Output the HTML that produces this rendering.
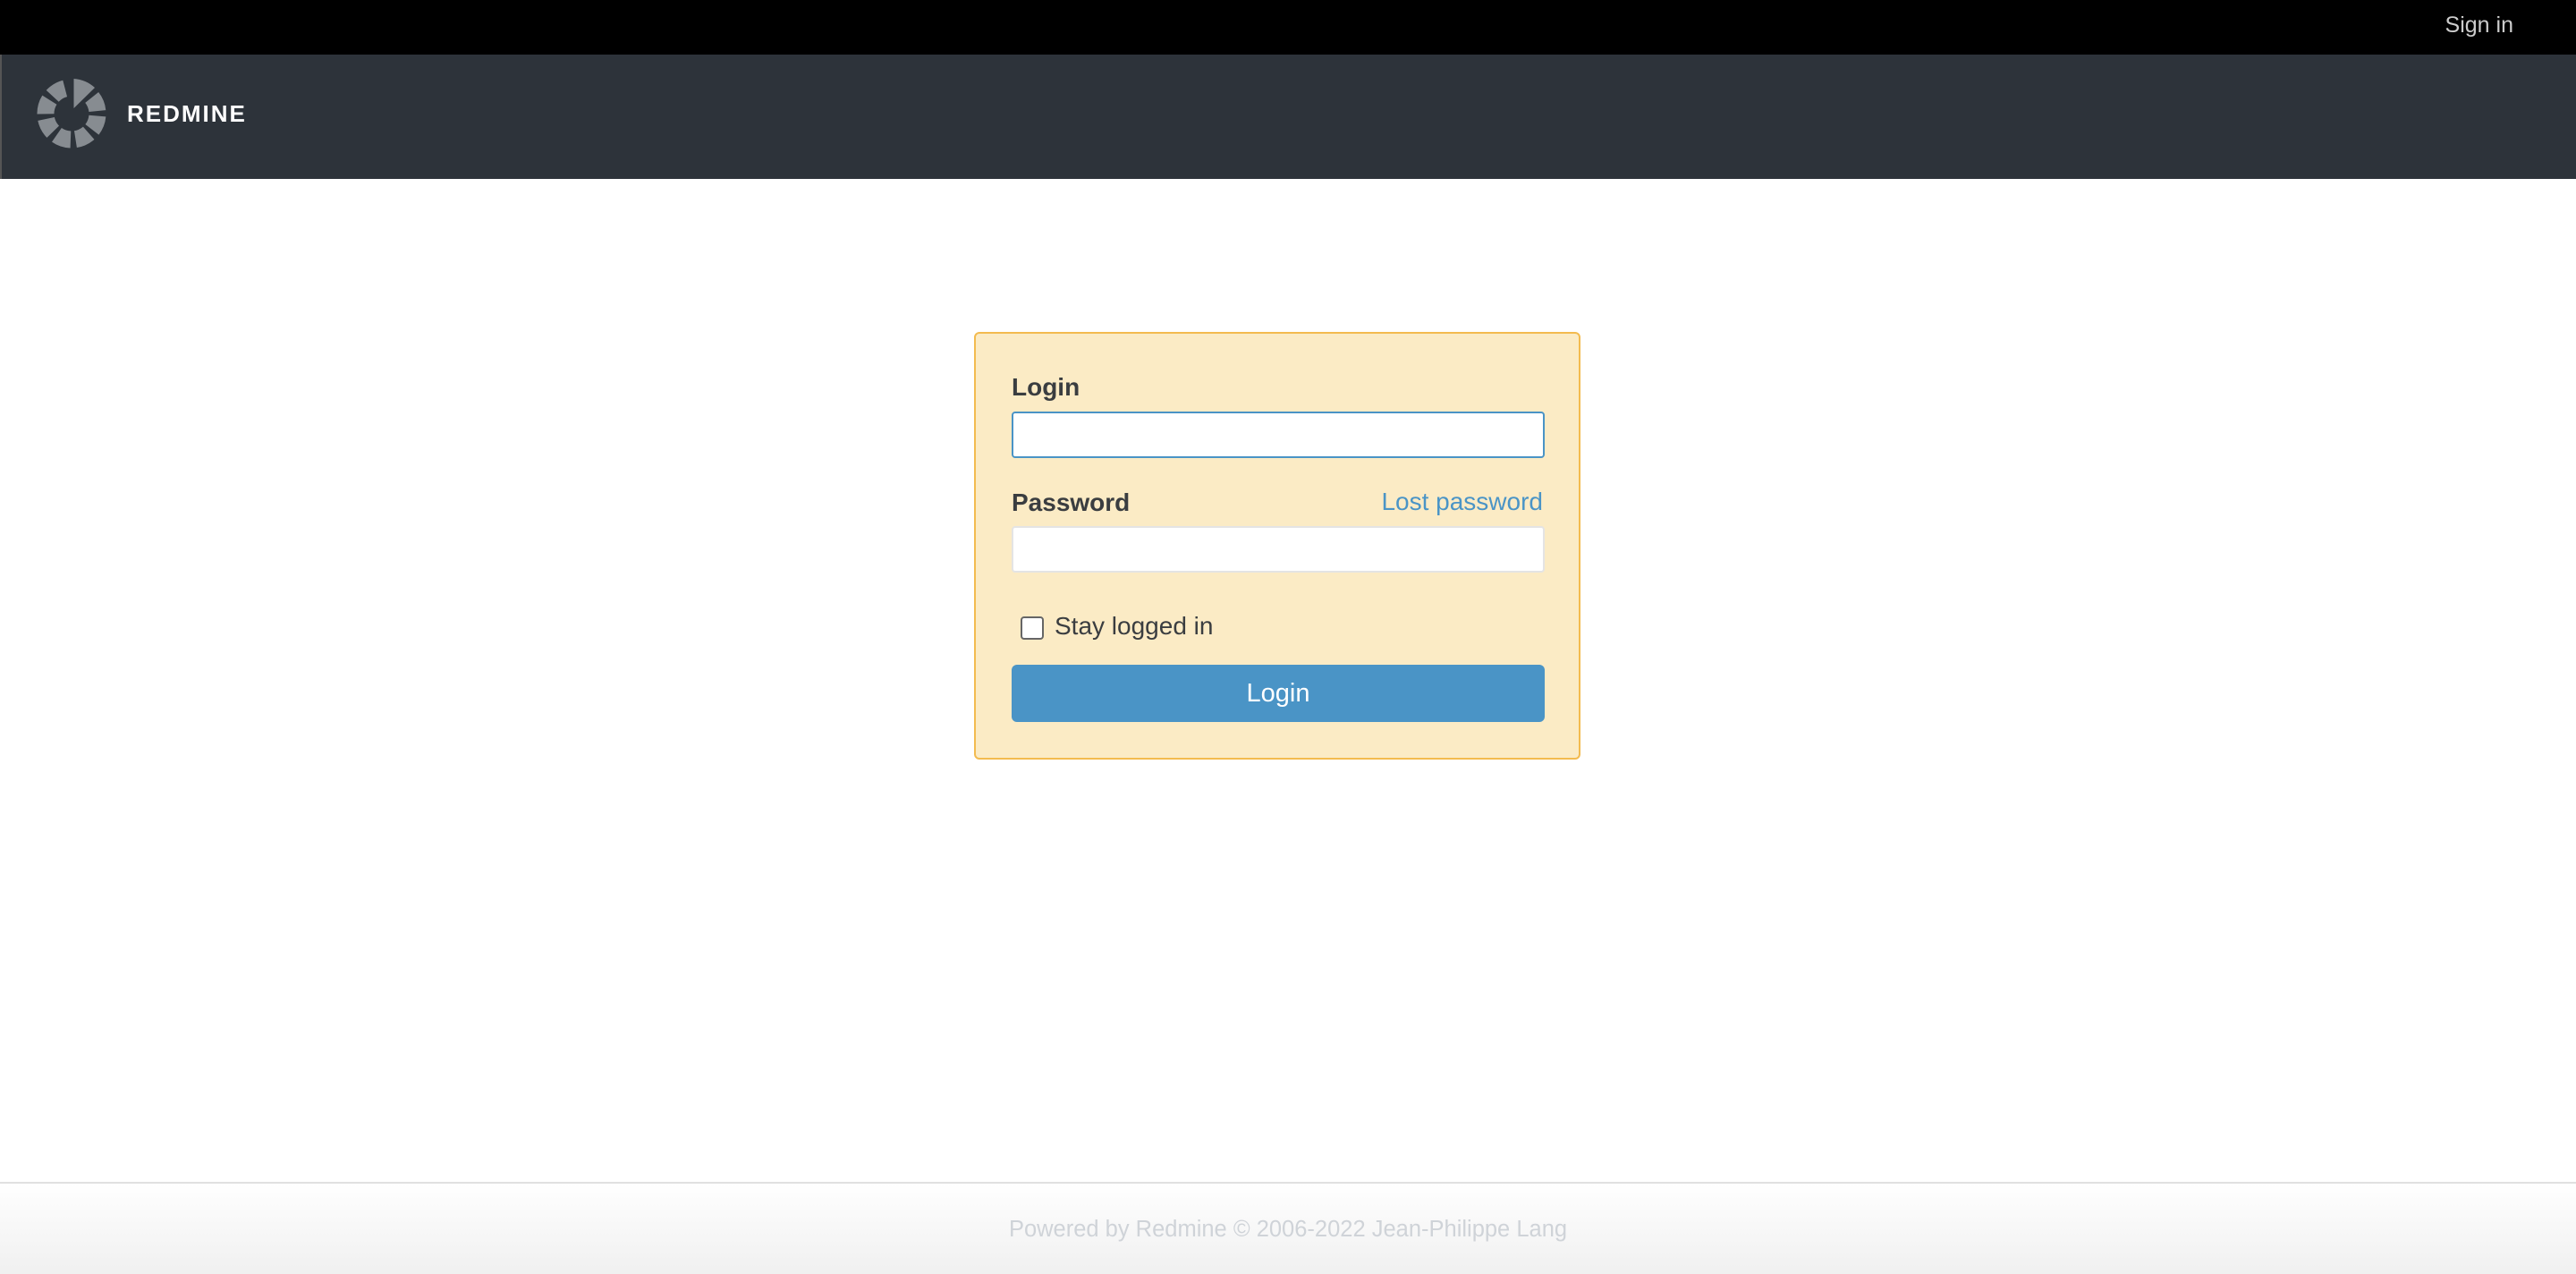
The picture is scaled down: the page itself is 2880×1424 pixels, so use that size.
<!DOCTYPE html>
<html><head><meta charset="utf-8"><style>
html,body{margin:0;padding:0;width:2880px;height:1422px;overflow:hidden;background:#fff;font-family:"Liberation Sans",Arial,sans-serif;}
#top{position:absolute;left:0;top:0;width:2880px;height:61px;background:#000;}
#top span{position:absolute;right:70px;top:14px;color:#ccc;font-size:25px;}
#hdr{position:absolute;left:0;top:61px;width:2880px;height:139px;background:#2d333a;border-left:2px solid #555;box-sizing:border-box;}
#logo{position:absolute;left:38px;top:26px;}
#title{position:absolute;left:140px;top:51px;color:#fff;font-weight:bold;font-size:26px;letter-spacing:2px;}
#box{position:absolute;left:1089px;top:371px;width:678px;height:478px;box-sizing:border-box;background:#fbebc5;border:2px solid #f3bb4f;border-radius:6px;}
.lbl{position:absolute;left:40px;font-size:28px;font-weight:bold;color:#3a3d40;}
.inp{position:absolute;left:40px;width:596px;height:52px;box-sizing:border-box;background:#fff;border:2px solid #e4e4e4;border-radius:4px;}
#lost{position:absolute;right:40px;top:172px;font-size:28px;color:#4a94c6;}
#cb{position:absolute;left:50px;top:316px;width:22px;height:22px;border:2px solid #666;border-radius:4px;background:#fff;}
#stay{position:absolute;left:88px;top:311px;font-size:28px;color:#3a3d40;}
#btn{position:absolute;left:40px;top:370px;width:596px;height:64px;background:#4a94c6;border-radius:6px;color:#fff;font-size:29px;text-align:center;line-height:64px;}
#foot{position:absolute;left:0;top:1321px;width:2880px;height:101px;border-top:2px solid #e0e0e0;background:linear-gradient(#fff,#f0f0f0);text-align:center;}
#foot span{position:absolute;left:0;right:0;top:37px;font-size:25.5px;color:#cfd3d8;}
</style></head><body>
<div id="top"><span>Sign in</span></div>
<div id="hdr">
<svg id="logo" width="80" height="80" viewBox="0 0 80 80">
<circle cx="40" cy="40" r="29" fill="none" stroke="#878c91" stroke-width="19" stroke-dasharray="16.5 5.5 16.5 5.5 16.5 5.5 16.5 5.5 16.5 5.5 16.5 5.5 16.5 40" transform="rotate(-38.5 40 40)"/>
<path d="M42.5,1 A39,39 0 0 1 66,11 L42.5,34 Z" fill="#878c91"/>
</svg>
<div id="title">REDMINE</div>
</div>
<div id="box">
<div class="lbl" style="top:44px">Login</div>
<div class="inp" style="top:87px;border-color:#4a94c6;"></div>
<div class="lbl" style="top:173px">Password</div>
<div id="lost">Lost password</div>
<div class="inp" style="top:215px"></div>
<div id="cb"></div>
<div id="stay">Stay logged in</div>
<div id="btn">Login</div>
</div>
<div id="foot"><span>Powered by Redmine © 2006-2022 Jean-Philippe Lang</span></div>
</body></html>
